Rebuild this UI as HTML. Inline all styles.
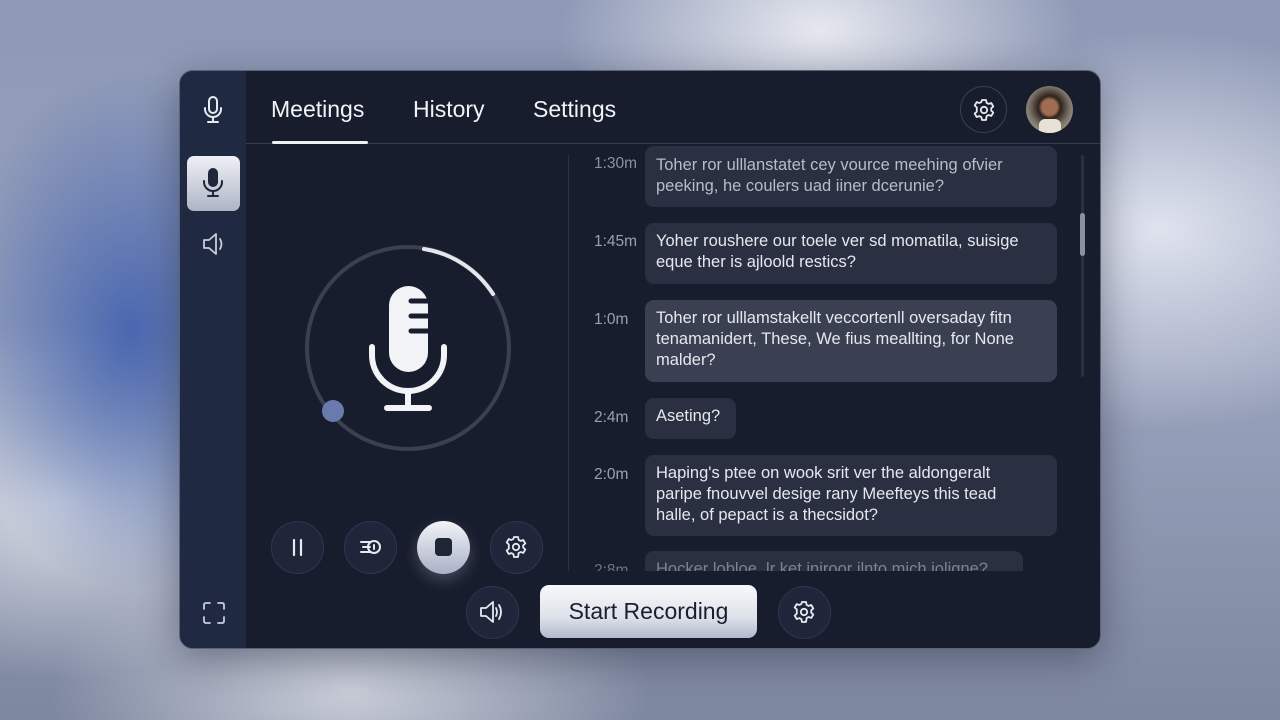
<!DOCTYPE html>
<html><head><meta charset="utf-8"><style>
*{margin:0;padding:0;box-sizing:border-box}
body{width:1280px;height:720px;overflow:hidden;position:relative;font-family:"Liberation Sans",sans-serif;
background:
radial-gradient(ellipse 180px 260px at 130px 330px,#4a68b0 0%,rgba(74,104,176,0) 100%),
radial-gradient(ellipse 300px 200px at 1160px 230px,#dfe3ee 0%,rgba(223,227,238,0) 100%),
radial-gradient(ellipse 260px 160px at 820px 30px,#e6e8ef 0%,rgba(230,232,239,0) 100%),
radial-gradient(ellipse 300px 160px at 350px 690px,#c9cdd8 0%,rgba(201,205,216,0) 100%),
radial-gradient(ellipse 260px 180px at 60px 500px,#d6dae3 0%,rgba(214,218,227,0) 100%),
linear-gradient(180deg,#8e99b6 0%,#9aa3bd 50%,#7d879f 100%);}
.a{position:absolute}
.win{left:179px;top:70px;width:922px;height:579px;border-radius:14px;background:#181d2e;overflow:hidden;border:1px solid #5a6378;box-shadow:0 10px 40px rgba(20,25,40,.4)}
.side{left:0;top:0;width:66px;height:100%;background:#1f2a42}
.hline{left:66px;top:72px;width:856px;height:1px;background:#353c50}
.tab{top:25px;font-size:23px;color:#f2f3f6}
.circ{border-radius:50%;background:#1f263a;border:1px solid #2e3650}
.bub{background:#2a3042;border-radius:9px;color:#e6e8ee;font-size:16.5px;line-height:21px;padding:8px 11px}
.t{color:#9aa0ae;font-size:15.5px;left:414px}
</style></head><body>
<div class="a win">
 <div class="a side"></div>
 <div class="a hline"></div>
 <svg class="a" style="left:22px;top:25px" width="22" height="28" viewBox="0 0 22 28" fill="none" stroke="#e8eaf0" stroke-width="2" stroke-linecap="round"><rect x="7" y="1" width="8" height="16" rx="4"/><path d="M3 12v1a8 8 0 0 0 16 0v-1M11 21v5M6 26h10"/></svg>
 <div class="a" style="left:7px;top:85px;width:53px;height:55px;border-radius:7px;background:linear-gradient(180deg,#f0f1f5,#aeb4c6)"></div>
 <svg class="a" style="left:22px;top:97px" width="22" height="30" viewBox="0 0 22 30" fill="none" stroke="#1f2638" stroke-width="2" stroke-linecap="round"><rect x="7" y="1" width="8" height="17" rx="4" fill="#1f2638"/><path d="M2 13v1a9 9 0 0 0 18 0v-1M11 23v5M6 28h10"/></svg>
 <svg class="a" style="left:22px;top:161px" width="26" height="24" viewBox="0 0 26 24" fill="none" stroke="#c9cdd8" stroke-width="1.8" stroke-linejoin="round" stroke-linecap="round"><path d="M2 8h5l7-6v20l-7-6H2z"/><path d="M18 7q3 5 0 10"/></svg>
 <svg class="a" style="left:22px;top:530px" width="24" height="24" viewBox="0 0 24 24" fill="none" stroke="#c9cdd8" stroke-width="1.8" stroke-linecap="round"><path d="M2 8V4q0-2 2-2h4M16 2h4q2 0 2 2v4M22 16v4q0 2-2 2h-4M8 22H4q-2 0-2-2v-4"/></svg>
 <div class="a tab" style="left:91px">Meetings</div>
 <div class="a tab" style="left:233px">History</div>
 <div class="a tab" style="left:353px">Settings</div>
 <div class="a" style="left:92px;top:70px;width:96px;height:3px;background:#eef0f4;border-radius:2px"></div>
 <div class="a circ" style="left:780px;top:15px;width:47px;height:47px;background:#181d2e;border-color:#3a4258"></div>
 <svg class="a" style="left:792px;top:27px" width="24" height="24" viewBox="0 0 24 24" fill="none" stroke="#e8eaf0" stroke-width="1.8" stroke-linejoin="round"><path d="M10 2h4l.6 2.8 2 1.1 2.7-.9 2 3.4-2.1 1.9v2.3l2.1 1.9-2 3.4-2.7-.9-2 1.1L14 22h-4l-.6-2.8-2-1.1-2.7.9-2-3.4 2.1-1.9V9.4L2.7 7.5l2-3.4 2.7.9 2-1.1z"/><circle cx="12" cy="12" r="3.2"/></svg>
 <div class="a" style="left:846px;top:15px;width:47px;height:47px;border-radius:50%;background:radial-gradient(circle at 50% 45%,#a06c52 0 22%,#2e221c 32%,#7a7268 58%,#c9c2b6 100%);overflow:hidden">
  <div class="a" style="left:13px;top:33px;width:22px;height:16px;background:#e8e2d6;border-radius:6px 6px 0 0"></div>
 </div>
 <svg class="a" style="left:118px;top:166px" width="220" height="220" viewBox="0 0 220 220" fill="none">
  <circle cx="110" cy="111" r="101" stroke="#3a4052" stroke-width="4"/>
  <path d="M126 12 A101 101 0 0 1 195 57" stroke="#e4e6ec" stroke-width="4" stroke-linecap="round"/>
  <circle cx="35" cy="174" r="11" fill="#6a7aad"/>
  <rect x="91" y="49" width="39" height="86" rx="19.5" fill="#f2f3f6"/>
  <path d="M113 64h17M113 79h17M113 94h17" stroke="#181d2e" stroke-width="5" stroke-linecap="round"/>
  <path d="M74 110v8a36 36 0 0 0 72 0v-8" stroke="#f2f3f6" stroke-width="6" stroke-linecap="round"/>
  <path d="M110 154v17M89 171h42" stroke="#f2f3f6" stroke-width="6" stroke-linecap="round"/>
 </svg>
 <div class="a circ" style="left:91px;top:450px;width:53px;height:53px"></div>
 <svg class="a" style="left:108px;top:466px" width="20" height="20"><path d="M6 3v15M13 3v15" stroke="#e8eaf0" stroke-width="2.2" stroke-linecap="round"/></svg>
 <div class="a circ" style="left:164px;top:450px;width:53px;height:53px"></div>
 <svg class="a" style="left:178px;top:465px" width="26" height="22" viewBox="0 0 26 22" fill="none" stroke="#e8eaf0" stroke-width="2" stroke-linecap="round"><path d="M3 6h9M5 11h7M3 16h9"/><circle cx="16" cy="11" r="6"/><path d="M16 9v4"/></svg>
 <div class="a" style="left:237px;top:450px;width:53px;height:53px;border-radius:50%;background:linear-gradient(180deg,#f2f3f7,#aab1c6);box-shadow:0 6px 14px rgba(200,205,220,.25)"></div>
 <div class="a" style="left:255px;top:467px;width:17px;height:18px;border-radius:4px;background:#1f2638"></div>
 <div class="a circ" style="left:310px;top:450px;width:53px;height:53px"></div>
 <svg class="a" style="left:324px;top:464px" width="24" height="24" viewBox="0 0 24 24" fill="none" stroke="#e8eaf0" stroke-width="1.8" stroke-linejoin="round"><path d="M10 2h4l.6 2.8 2 1.1 2.7-.9 2 3.4-2.1 1.9v2.3l2.1 1.9-2 3.4-2.7-.9-2 1.1L14 22h-4l-.6-2.8-2-1.1-2.7.9-2-3.4 2.1-1.9V9.4L2.7 7.5l2-3.4 2.7.9 2-1.1z"/><circle cx="12" cy="12" r="3.2"/></svg>
 <div class="a" style="left:388px;top:84px;width:1px;height:416px;background:#2c3346"></div>
 <div class="a" style="left:390px;top:73px;width:520px;height:427px;overflow:hidden">
  <div class="a bub" style="left:75px;top:2px;width:412px;height:61px;padding-top:9px;color:#b8bcc8">Toher ror ulllanstatet cey vource meehing ofvier<br>peeking, he coulers uad iiner dcerunie?</div>
  <div class="a t" style="left:24px;top:11px;color:#8a909e">1:30m</div>
  <div class="a bub" style="left:75px;top:79px;width:412px;height:61px">Yoher roushere our toele ver sd momatila, suisige<br>eque ther is ajloold restics?</div>
  <div class="a t" style="left:24px;top:89px">1:45m</div>
  <div class="a bub" style="left:75px;top:156px;width:412px;height:82px;background:#3a4052">Toher ror ulllamstakellt veccortenll oversaday fitn<br>tenamanidert, These, We fius meallting, for None<br>malder?</div>
  <div class="a t" style="left:24px;top:167px">1:0m</div>
  <div class="a bub" style="left:75px;top:254px;width:91px;height:41px">Aseting?</div>
  <div class="a t" style="left:24px;top:265px">2:4m</div>
  <div class="a bub" style="left:75px;top:311px;width:412px;height:81px">Haping's ptee on wook srit ver the aldongeralt<br>paripe fnouvvel desige rany Meefteys this tead<br>halle, of pepact is a thecsidot?</div>
  <div class="a t" style="left:24px;top:322px">2:0m</div>
  <div class="a bub" style="left:75px;top:407px;width:378px;height:40px;color:#7d8392">Hocker lobloe, lr ket iniroor ilnto mich joligne?</div>
  <div class="a t" style="left:24px;top:418px;color:#6d7382">2:8m</div>
 </div>
 <div class="a" style="left:901px;top:84px;width:3px;height:222px;background:#2a3042;border-radius:2px"></div>
 <div class="a" style="left:900px;top:142px;width:5px;height:43px;background:#8a90a0;border-radius:3px"></div>
 <div class="a circ" style="left:286px;top:515px;width:53px;height:53px"></div>
 <svg class="a" style="left:299px;top:529px" width="26" height="24" viewBox="0 0 26 24" fill="none" stroke="#e8eaf0" stroke-width="1.8" stroke-linejoin="round" stroke-linecap="round"><path d="M2 8h5l7-6v20l-7-6H2z"/><path d="M17 8q2 4 0 8M20 5q4 7 0 14"/></svg>
 <div class="a" style="left:360px;top:514px;width:217px;height:53px;border-radius:9px;background:linear-gradient(180deg,#f7f8fa 0%,#dfe2ea 60%,#b3bad0 100%);color:#1a1f2e;font-size:23px;text-align:center;line-height:53px">Start Recording</div>
 <div class="a circ" style="left:598px;top:515px;width:53px;height:53px"></div>
 <svg class="a" style="left:612px;top:529px" width="24" height="24" viewBox="0 0 24 24" fill="none" stroke="#e8eaf0" stroke-width="1.8" stroke-linejoin="round"><path d="M10 2h4l.6 2.8 2 1.1 2.7-.9 2 3.4-2.1 1.9v2.3l2.1 1.9-2 3.4-2.7-.9-2 1.1L14 22h-4l-.6-2.8-2-1.1-2.7.9-2-3.4 2.1-1.9V9.4L2.7 7.5l2-3.4 2.7.9 2-1.1z"/><circle cx="12" cy="12" r="3.2"/></svg>
</div>
</body></html>
